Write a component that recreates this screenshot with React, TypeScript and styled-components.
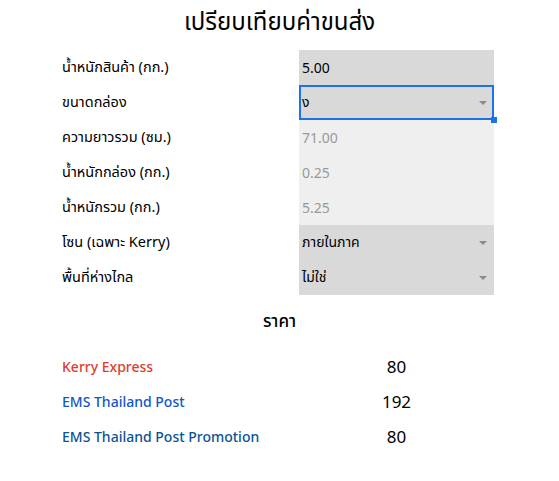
import React from "react";
import styled, { createGlobalStyle } from "styled-components";

const GlobalStyle = createGlobalStyle`
  html, body {
    margin: 0;
    padding: 0;
    background: #ffffff;
  }
  body {
    font-family: "Noto Sans", "Noto Sans Thai", "DejaVu Sans", sans-serif;
    color: #000000;
  }
`;

type Field = {
  label: string;
  value: string;
  kind: "input" | "select" | "computed";
  active?: boolean;
};

const fields: Field[] = [
  { label: "น้ำหนักสินค้า (กก.)", value: "5.00", kind: "input" },
  { label: "ขนาดกล่อง", value: "ง", kind: "select", active: true },
  { label: "ความยาวรวม (ซม.)", value: "71.00", kind: "computed" },
  { label: "น้ำหนักกล่อง (กก.)", value: "0.25", kind: "computed" },
  { label: "น้ำหนักรวม (กก.)", value: "5.25", kind: "computed" },
  { label: "โซน (เฉพาะ Kerry)", value: "ภายในภาค", kind: "select" },
  { label: "พื้นที่ห่างไกล", value: "ไม่ใช่", kind: "select" },
];

const prices = [
  { name: "Kerry Express", price: "80", color: "#dd3d2b" },
  { name: "EMS Thailand Post", price: "192", color: "#1155cc" },
  { name: "EMS Thailand Post Promotion", price: "80", color: "#0b5394" },
];

export default () => {
  return (
    <>
      <GlobalStyle />
      <Sheet>
        <Title>เปรียบเทียบค่าขนส่ง</Title>
        <Form>
          {fields.map((f) => (
            <Row key={f.label}>
              <Label>{f.label}</Label>
              <Cell kind={f.kind} active={f.active}>
                <span>{f.value}</span>
                {f.kind === "select" && <Arrow />}
                {f.active && <Handle />}
              </Cell>
            </Row>
          ))}
        </Form>
        <SubTitle>ราคา</SubTitle>
        <Prices>
          {prices.map((p) => (
            <Row key={p.name}>
              <Carrier color={p.color}>{p.name}</Carrier>
              <Price>{p.price}</Price>
            </Row>
          ))}
        </Prices>
      </Sheet>
    </>
  );
};

const Sheet = styled.div`
  width: 435px;
  margin: 0 auto;
  display: flex;
  flex-direction: column;
`;

const Title = styled.h1`
  margin: 0;
  height: 50px;
  display: flex;
  align-items: center;
  justify-content: center;
  font-size: 24px;
  font-weight: 400;
  padding-bottom: 6px;
  box-sizing: border-box;
`;

const Form = styled.div`
  display: flex;
  flex-direction: column;
`;

const Row = styled.div`
  display: grid;
  grid-template-columns: 237px 195px;
  height: 35px;
`;

const Label = styled.div`
  display: flex;
  align-items: center;
  font-size: 14.5px;
`;

const Cell = styled.div<{ kind: Field["kind"]; active?: boolean }>`
  position: relative;
  display: flex;
  align-items: center;
  justify-content: space-between;
  padding: 0 7px 0 3px;
  font-size: 14px;
  background: ${(p) => (p.kind === "computed" ? "#efefef" : "#d9d9d9")};
  color: ${(p) => (p.kind === "computed" ? "#999999" : "#000000")};
  box-shadow: ${(p) => (p.active ? "inset 0 0 0 2px #1a73e8" : "none")};
  z-index: ${(p) => (p.active ? 1 : "auto")};
`;

const Arrow = styled.div`
  width: 0;
  height: 0;
  border-left: 4px solid transparent;
  border-right: 4px solid transparent;
  border-top: 4px solid #8a8a8a;
`;

const Handle = styled.div`
  position: absolute;
  right: -3px;
  bottom: -3px;
  width: 6px;
  height: 6px;
  background: #1a73e8;
`;

const SubTitle = styled.h2`
  margin: 0;
  height: 54px;
  display: flex;
  align-items: center;
  justify-content: center;
  font-size: 17px;
  font-weight: 500;
`;

const Prices = styled.div`
  display: flex;
  flex-direction: column;
`;

const Carrier = styled.div<{ color: string }>`
  display: flex;
  align-items: center;
  font-size: 14px;
  font-weight: 500;
  color: ${(p) => p.color};
`;

const Price = styled.div`
  display: flex;
  align-items: center;
  justify-content: center;
  font-size: 17px;
  font-weight: 400;
`;
